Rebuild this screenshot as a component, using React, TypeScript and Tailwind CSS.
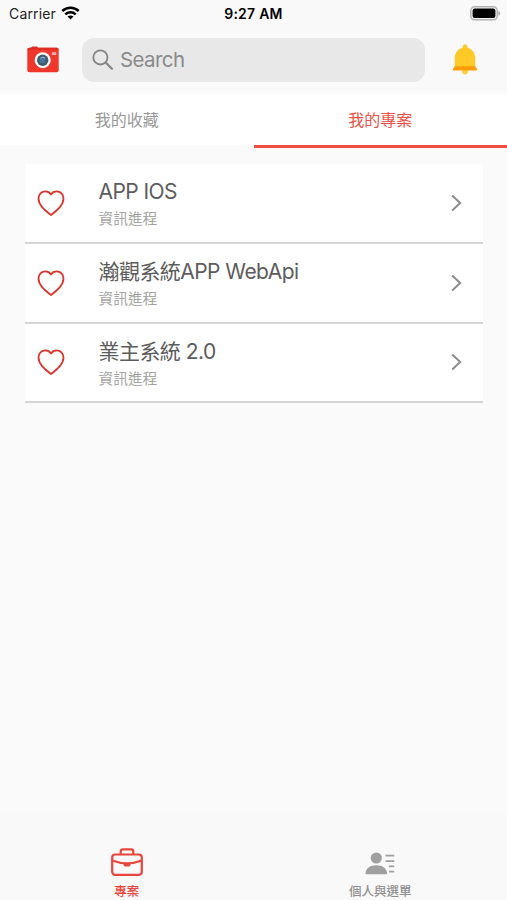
import { clsx } from 'clsx';

const projects = [
  { id: 1, name: 'APP IOS', stage: '資訊進程' },
  { id: 2, name: '瀚觀系統APP WebApi', stage: '資訊進程' },
  { id: 3, name: '業主系統 2.0', stage: '資訊進程' },
];

const WifiIcon = () => (
  <svg width="19" height="14" viewBox="0 0 18 14" fill="none" stroke="#000" strokeWidth="2.5">
    <path d="M.8 5C5.5.6 12.500.6 17.200 5" />
    <path d="M3.800 8.400c3-2.800 7.400-2.800 10.400 0" />
    <path d="M9 13.500 6 10.600c1.700-1.400 4.300-1.400 6 0Z" fill="#000" stroke="none" />
  </svg>
);

const BatteryIcon = () => (
  <svg width="31" height="15" viewBox="0 0 31 15">
    <rect x="0.8" y="0.8" width="26.400" height="13" rx="3.800" fill="none" stroke="#b4b4b4" strokeWidth="1.500" />
    <rect x="2.600" y="2.600" width="22.800" height="9.400" rx="2" fill="#000" />
    <path d="M28.300 4.900c2.500.8 2.500 3.800 0 4.600Z" fill="#acacac" />
  </svg>
);

const CameraIcon = () => (
  <svg width="32" height="27" viewBox="0 0 32 27">
    <path d="M3.500 2.500 5 .4h5l1.500 2.100Z" fill="#d32f26" />
    <rect x="0.300" y="1.700" width="31.400" height="24.600" rx="2" fill="#f0372c" />
    <path d="M.3 3.700a2 2 0 0 1 2-2h27.400a2 2 0 0 1 2 2Z" fill="#df2d24" />
    <circle cx="15.700" cy="14.200" r="8" fill="#fff" />
    <circle cx="15.700" cy="14.200" r="5.700" fill="#455a64" />
    <circle cx="15.500" cy="14" r="3.200" fill="#42749c" />
    <path d="M13.600 12.500c1-1.500 3.200-1.600 4.200-.4" fill="none" stroke="#90b8d8" strokeWidth="1.100" />
    <rect x="24.800" y="6.300" width="4.500" height="2.700" rx="0.400" fill="#eeb0b0" />
  </svg>
);

const BellIcon = () => (
  <svg width="26" height="32" viewBox="0 0 26 32">
    <circle cx="13" cy="27.600" r="3" fill="#ffcf40" />
    <path d="M13 .3c1.400 0 2.300 1 2.300 2.300v1.200c4.600 1.100 7.900 5 7.900 9.900v9.300h-20.400v-9.300c0-4.900 3.300-8.800 7.900-9.900v-1.200C10.700 1.300 11.600.3 13 .3Z" fill="#ffc928" />
    <path d="M2.800 22.300h20.400l1.900 2.800c.4.700.1 1.500-.9 1.500H1.800c-1 0-1.300-.8-.9-1.500Z" fill="#ff9c08" />
  </svg>
);

const SearchIcon = () => (
  <svg width="22" height="22" viewBox="0 0 22 22" fill="none" stroke="#858585" strokeLinecap="round">
    <circle cx="8.400" cy="8.400" r="7.100" strokeWidth="1.800" />
    <path d="m13.800 13.800 6.200 6" strokeWidth="2.200" />
  </svg>
);

const HeartIcon = () => (
  <svg width="28" height="26" viewBox="0 0 28 26" fill="none" stroke="#d8362c" strokeWidth="1.800" strokeLinejoin="round">
    <path d="M14 25C7.500 20 1.500 15 1.500 8.600 1.500 4.200 4.600 1.400 8.300 1.400c2.500 0 4.500 1.200 5.700 3 1.200-1.800 3.200-3 5.700-3 3.700 0 6.800 2.800 6.800 7.200C26.500 15 20.500 20 14 25Z" />
  </svg>
);

const ChevronIcon = () => (
  <svg width="11" height="18" viewBox="0 0 11 18" fill="none" stroke="#8c8c8c" strokeWidth="2">
    <path d="m1.200 1.500 8 7.500-8 7.500" />
  </svg>
);

const BriefcaseIcon = () => (
  <svg width="32" height="28" viewBox="0 0 32 28" fill="none" stroke="#e8453c" strokeWidth="2.200">
    <rect x="1.200" y="6.500" width="29.600" height="20.300" rx="3" />
    <path d="M9.700 6.500v-3c0-1.300.9-2.200 2.200-2.200h8.200c1.300 0 2.200.9 2.200 2.200v3" />
    <path d="M1.200 12.500c9.400 3.600 20.200 3.600 29.600 0" />
    <path d="M12.500 15h7v1.800c0 1-.6 1.700-1.600 1.700h-3.800c-1 0-1.600-.7-1.600-1.700Z" fill="#e8453c" stroke="none" />
  </svg>
);

const ContactIcon = () => (
  <svg width="30" height="23" viewBox="0 0 30 23" fill="#a0a0a0">
    <circle cx="11.300" cy="6" r="5.600" />
    <path d="M1.400 22.200c-.6 0-1-.5-.9-1.200.6-5 5.100-7.700 10.800-7.700s10.200 2.700 10.800 7.700c.1.700-.3 1.200-.9 1.200Z" />
    <path d="M20.500 2.700h8.800v1.700h-8.800ZM20.500 8.200h8.800v1.700h-8.800ZM23.800 13.500h5.500v1.700h-5.500ZM24 18.700h5.300v1.700h-5.300Z" />
  </svg>
);

const Tab = ({ label, active }: { label: string; active?: boolean }) => (
  <button
    className={clsx(
      'flex h-[54px] flex-1 items-center justify-center border-b-[3px] text-base leading-none',
      active ? 'border-[#ee4f42] text-[#ec5247]' : 'border-[#fafafa] text-[#989898]'
    )}
  >
    {label}
  </button>
);

export default function App() {
  return (
    <div className="flex h-[900px] w-[507px] flex-col overflow-hidden bg-[#fafafa] font-[Inter,'Noto_Sans_CJK_TC',sans-serif]">
      {/* Status bar */}
      <div className="grid h-7 shrink-0 grid-cols-3 items-center bg-[#f9f9f9] pr-[6px] pb-[2px] pl-[9px]">
        <div className="flex items-center gap-[5px] text-[14px] tracking-[0.15px] text-[#222]">
          Carrier
          <WifiIcon />
        </div>
        <div className="-ml-[3px] text-center text-[14px] font-semibold tracking-[0.25px] whitespace-nowrap text-black">9:27 AM</div>
        <div className="flex justify-end">
          <BatteryIcon />
        </div>
      </div>

      {/* Search row */}
      <header className="flex h-[66px] shrink-0 items-center bg-[#f9f9f9] pr-[29px] pb-[3px] pl-[27px]">
        <CameraIcon />
        <div className="mr-[27px] ml-[23px] flex h-11 flex-1 items-center gap-[6px] rounded-[12px] bg-[#e8e8e8] pl-[10px]">
          <SearchIcon />
          <span className="pt-[2px] text-[20.5px] tracking-[-0.6px] text-[#8a8a8a]">Search</span>
        </div>
        <BellIcon />
      </header>

      <nav className="flex shrink-0 bg-white">
        <Tab label="我的收藏" />
        <Tab label="我的專案" active />
      </nav>

      <main className="flex-1 pt-[16.4px] pr-6 pl-[25px]">
        {projects.map((project) => (
          <div key={project.id} className="flex h-[79.6px] items-center border-b-2 border-[#d6d6d6] bg-white pr-[21px] pl-[12px]">
            <HeartIcon />
            <div className="ml-[33.5px] flex-1 pt-[5.6px]">
              <div className="text-[21px] leading-[28px] tracking-[-0.55px] text-[#5c5c5c]">{project.name}</div>
              <div className="text-[14.7px] leading-[27px] text-[#a3a3a3]">{project.stage}</div>
            </div>
            <ChevronIcon />
          </div>
        ))}
      </main>

      {/* Bottom tab bar */}
      <footer className="flex h-[88px] shrink-0 bg-[#f9f9f9]">
        <div className="flex flex-1 flex-col items-center pt-[35.5px] text-[#e8453c]">
          <BriefcaseIcon />
          <span className="mt-[8.5px] text-[12.5px] leading-[15px] font-medium">專案</span>
        </div>
        <div className="flex flex-1 flex-col items-center pt-[40px] text-[#8f8f8f]">
          <ContactIcon />
          <span className="mt-[9px] text-[12.5px] leading-[15px] font-medium">個人與選單</span>
        </div>
      </footer>
    </div>
  );
}
